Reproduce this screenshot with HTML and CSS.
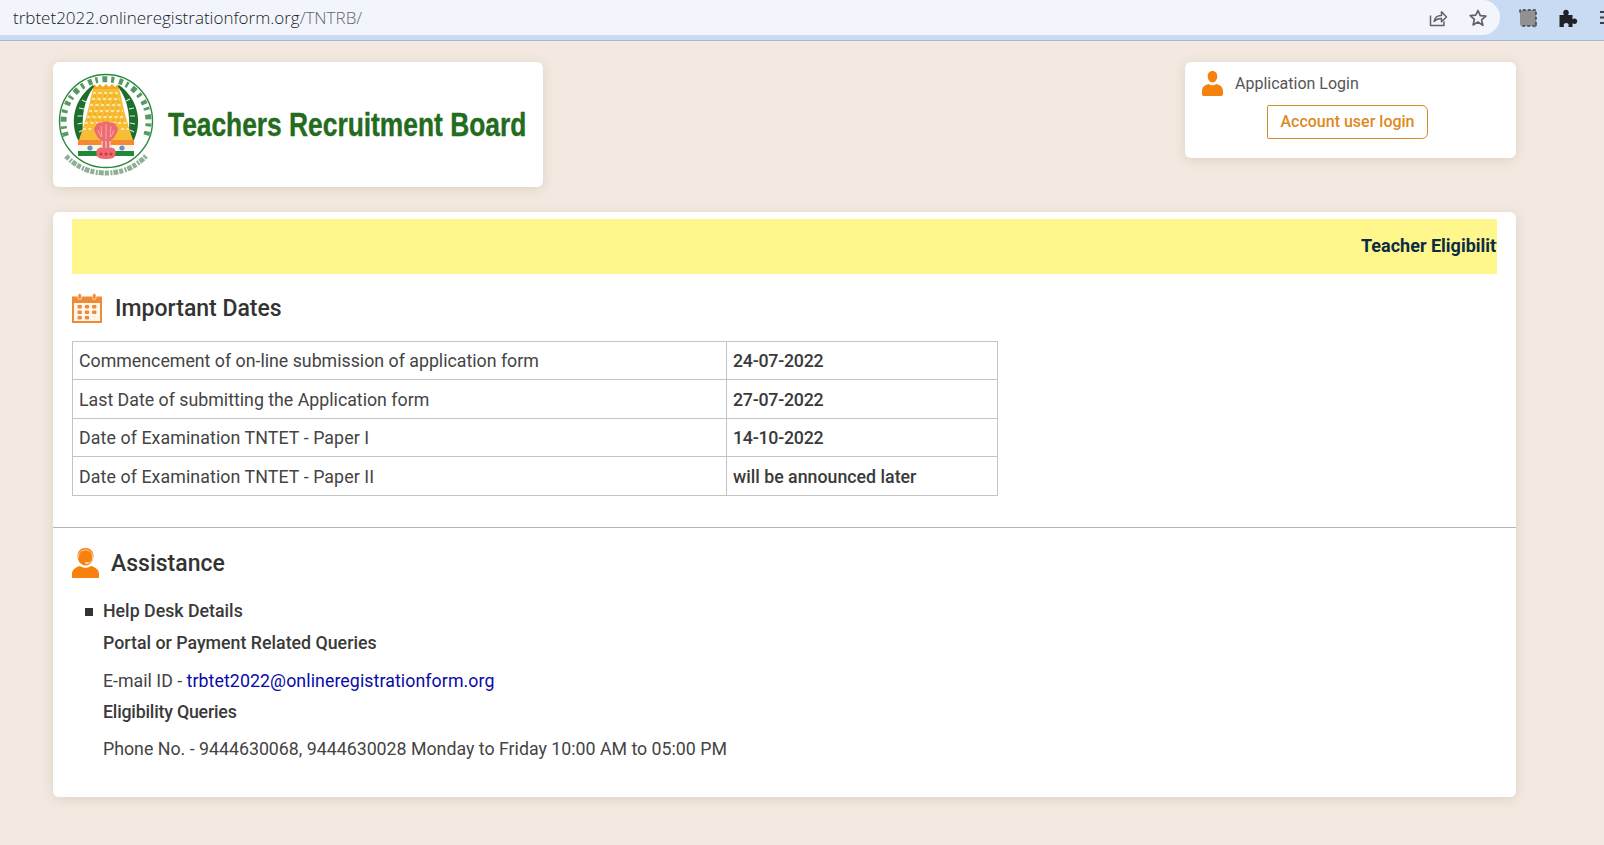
FILE: index.html
```html
<!DOCTYPE html>
<html lang="en">
<head>
<meta charset="utf-8">
<title>TNTRB</title>
<link rel="stylesheet" href="styles.css">
</head>
<body>
<div class="chrome">
  <div class="omnibox">
    <div class="url">trbtet2022.onlineregistrationform.org<span class="url-path">/TNTRB/</span></div>
    <svg class="omni-icon share" viewBox="0 0 20 20"><path d="M2.500 7.500v10h13.500v-4M6 13.500c.6-3.600 3.400-6 7.500-6V3.800l5 5.200-5 4.800v-3.300c-3 0-5.500.8-7.500 3z" fill="none" stroke="#5f6368" stroke-width="1.500" stroke-linejoin="round"/></svg>
    <svg class="omni-icon star" viewBox="0 0 20 20"><path d="M10 2.500l2.300 5.200 5.600.5-4.300 3.700 1.300 5.500L10 14l-4.900 2.900 1.300-5.500-4.300-3.700 5.600-.5z" fill="none" stroke="#5f6368" stroke-width="1.700" stroke-linejoin="round"/></svg>
  </div>
  <div class="ext-icons">
    <svg class="ext" viewBox="0 0 20 20"><rect x="2" y="2" width="16" height="16" rx="2" fill="#8f9193"/><path d="M2 4.500V2.500Q2 2 2.500 2H18v16H2.500" fill="none" stroke="#3c4043" stroke-width="1.500" stroke-dasharray="3 2"/><path d="M17 15.500v4M15 17.500h4" stroke="#5f6368" stroke-width="1"/></svg>
    <svg class="ext" viewBox="0 0 20 20"><path d="M1.500 7H6c-.6-.8-.8-1.500-.8-2.200C5.200 3 6.500 1.800 8 1.800s2.800 1.200 2.800 3c0 .7-.2 1.400-.8 2.200h4.500v4.300c.7-.5 1.400-.7 2-.7 1.600 0 2.700 1.200 2.700 2.700s-1.100 2.700-2.700 2.700c-.6 0-1.300-.2-2-.7V19h-4.300c.4-.7.500-1.200.5-1.700 0-1.400-1.100-2.300-2.500-2.300s-2.500.9-2.500 2.300c0 .5.100 1 .5 1.700H1.500z" fill="#202124"/></svg>
    <svg class="ext menu" viewBox="0 0 12 20"><path d="M2 4h12M2 9.500h12M2 15h12" stroke="#3c4043" stroke-width="2"/></svg>
  </div>
</div>

<div class="page">
  <header class="top-row">
    <div class="card logo-card">
      <svg class="emblem" viewBox="0 0 96 106">
        <!-- outer ring -->
        <circle cx="48" cy="49" r="46.500" fill="#fff" stroke="#2c8a3e" stroke-width="1.400"/>
        <!-- lettering band -->
        <path d="M8 64A42.500 42.500 0 1 1 88 64" fill="none" stroke="#559a63" stroke-width="6" stroke-dasharray="4 3.500 2.500 4.500 5 4 3 5"/>
        <circle cx="48" cy="49" r="36.500" fill="#fff"/>
        <!-- bottom lettering -->
        <path d="M8 84Q24 101 48 101T88 84" fill="none" stroke="#8fb098" stroke-width="5" stroke-dasharray="4 1.500 2 1 5 1"/>
        <!-- flanking crescents -->
        <path d="M20 68C11 48 17 26 35 13l1.500 1.500C25 28 23 48 26 68z" fill="#1e6f2e"/>
        <path d="M76 68C85 48 79 26 61 13l-1.500 1.500C71 28 73 48 70 68z" fill="#1e6f2e"/>
        <path d="M21 60l4-2M19.500 52l5-1M19.500 44l5 0M21 36l5 1M24 28l4 2M72 58l4 2M72 51l5 1M72 44l5 0M71 37l5-1M68 29l4-2" stroke="#dcefe0" stroke-width="1.100"/>
        <!-- gopuram -->
        <path d="M35 16h26l3 13 3 13 4 14 4 12H21l4-12 4-14 3-13z" fill="#f8bd36"/>
        <path d="M36 12l3 3 3-3 3 3 3-3 3 3 3-3 3 3 3-3v5H36z" fill="#f2a820"/>
        <g stroke="#fff3c4" stroke-width="1.500" stroke-dasharray="3 2.500">
          <path d="M35 21h26M34 27h28M32 33h32M31 39h34M29 45h38M27 51h42M25 57h8M63 57h8"/>
        </g>
        <g stroke="#e89a1c" stroke-width="1" stroke-dasharray="2 3">
          <path d="M36 24h24M34 30h28M33 36h30M31 42h34M29 48h38"/>
        </g>
        <!-- flag band -->
        <path d="M20 68h56v5H20z" fill="#f28c33"/>
        <path d="M20 73h56v6H20z" fill="#f6f6ee"/>
        <path d="M20 79h56v5H20z" fill="#1f8a35"/>
        <circle cx="32" cy="76" r="2.600" fill="#6f8fc9"/>
        <circle cx="64" cy="76" r="2.600" fill="#6f8fc9"/>
        <!-- national emblem -->
        <path d="M38 62c-3-4-2-7 0-8 0-3 3-4 5-3 2-2 8-2 10 0 2-1 5 0 5 3 2 1 3 4 0 8-1 3-3 5-5 6l-1 7 3 1c3 1 3 5 2 8-1 2-3 3-9 3s-8-1-9-3c-1-3-1-7 2-8l3-1-1-7c-2-1-4-3-5-6z" fill="#ec6a70"/>
        <path d="M48 52v15M43 54l1 11M53 54l-1 11M40 58l3 7M56 58l-3 7" stroke="#f7a9ac" stroke-width="1"/>
        <path d="M44 69v7M48 69v7M52 69v7" stroke="#fbe4e4" stroke-width="1"/>
        <circle cx="43" cy="82" r="1.500" fill="#c9393f"/><circle cx="48" cy="82" r="1.500" fill="#c9393f"/><circle cx="53" cy="82" r="1.500" fill="#c9393f"/>
      </svg>
      <div class="logo-text">Teachers Recruitment Board</div>
    </div>
    <div class="card login-card">
      <div class="login-title">
        <svg class="user-icon" viewBox="0 0 22 26"><path d="M11 0c3.200 0 5 2.400 5 5.500S14.200 12 11 12 6 8.600 6 5.500 7.800 0 11 0zM0 21c0-4 2.500-6.500 7-7.500 1.200 1 2.500 1.300 4 1.300s2.800-.3 4-1.300c4.500 1 7 3.500 7 7.500v3.500c0 1-1 1.500-2 1.500H2c-1 0-2-.5-2-1.500z" fill="#f6820d"/></svg>
        <span>Application Login</span>
      </div>
      <a class="login-btn">Account user login</a>
    </div>
  </header>

  <main class="card main-card">
    <div class="section-top">
      <div class="ticker"><span>Teacher Eligibility Test 2022 - Online Application Portal</span></div>
      <h2 class="heading heading-dates">
        <svg class="cal-icon" viewBox="0 0 30 30"><path d="M0 3.500h30V30H0z" fill="#f08a35"/><rect x="2" y="10" width="26" height="18" fill="#fff6ee"/><rect x="6" y="0.500" width="3.400" height="6" rx="1.700" fill="#f08a35" stroke="#fff" stroke-width=".6"/><rect x="20.600" y="0.500" width="3.400" height="6" rx="1.700" fill="#f08a35" stroke="#fff" stroke-width=".6"/><g fill="#ee8a3c"><rect x="5.500" y="12" width="4.400" height="3.400" rx="1"/><rect x="12.800" y="12" width="4.400" height="3.400" rx="1"/><rect x="20" y="12" width="4.400" height="3.400" rx="1"/><rect x="5.500" y="17.500" width="4.400" height="3.400" rx="1"/><rect x="12.800" y="17.500" width="4.400" height="3.400" rx="1"/><rect x="20" y="17.500" width="4.400" height="3.400" rx="1"/><rect x="5.500" y="23" width="4.400" height="3.400" rx="1"/><rect x="12.800" y="23" width="4.400" height="3.400" rx="1"/></g></svg>
        Important Dates
      </h2>
      <table class="dates">
        <tr><td class="c1">Commencement of on-line submission of application form</td><td class="c2 date">24-07-2022</td></tr>
        <tr><td class="c1">Last Date of submitting the Application form</td><td class="c2 date">27-07-2022</td></tr>
        <tr><td class="c1">Date of Examination TNTET - Paper I</td><td class="c2 date">14-10-2022</td></tr>
        <tr><td class="c1">Date of Examination TNTET - Paper II</td><td class="c2">will be announced later</td></tr>
      </table>
    </div>
    <div class="section-help">
      <h2 class="heading heading-help">
        <svg class="agent-icon" viewBox="0 0 27 31"><path d="M13.500 0c4.800 0 8 3.400 8 8 0 5-3.500 9.500-8 9.500s-8-4.500-8-9.500c0-4.600 3.200-8 8-8z" fill="#f6820d"/><path d="M6.500 10V8.500C6.500 4.500 9.500 2 13.500 2s7 2.500 7 6.500V11c0 2.500-2.500 3.800-5.500 4" fill="none" stroke="#fbd3ae" stroke-width="1"/><rect x="13" y="14" width="3.500" height="2" rx="1" fill="#fbd3ae"/><path d="M0 26c0-4 3-6.500 8-8 1.500 1.200 3.500 1.800 5.500 1.800s4-.6 5.500-1.800c5 1.500 8 4 8 8v3c0 .6-.5 1-1 1H1c-.5 0-1-.4-1-1z" fill="#f6820d"/></svg>
        Assistance
      </h2>
      <ul class="help-list">
        <li>
          <div class="help-title">Help Desk Details</div>
          <div class="help-sub">Portal or Payment Related Queries</div>
          <p class="help-line help-mail">E-mail ID - <a class="mail">trbtet2022@onlineregistrationform.org</a></p>
          <div class="help-sub help-elig">Eligibility Queries</div>
          <p class="help-line help-phone">Phone No. - 9444630068, 9444630028 Monday to Friday 10:00 AM to 05:00 PM</p>
        </li>
      </ul>
    </div>
  </main>
</div>
</body>
</html>
```

FILE: styles.css
```css
* { box-sizing: border-box; }
html, body { margin: 0; height: 100%; overflow: hidden; }
body {
  background: #f3e9e0;
  font-family: Roboto, "Liberation Sans", sans-serif;
  color: #333;
}

/* Browser toolbar */
.chrome {
  display: flex;
  height: 41px;
  background: #c9daf3;
  border-bottom: 1px solid #a9b7cc;
  padding-bottom: 5px;
}
.omnibox {
  flex: none;
  width: 1500px;
  display: flex;
  align-items: center;
  background: #f2f6fc;
  border-radius: 0 18px 18px 0;
  padding: 0 0 0 13px;
}
.url {
  flex: 1;
  font-family: "Open Sans", "Liberation Sans", sans-serif;
  font-size: 17px;
  font-weight: 300;
  color: #202124;
}
.url-path { color: #5f6368; }
.omni-icon { width: 20px; height: 20px; }
.share { margin-right: 20px; }
.star { margin-right: 12px; }
.ext-icons {
  display: flex;
  align-items: center;
  padding-left: 18px;
  gap: 20px;
}
.ext { width: 20px; height: 20px; flex: none; }
.ext.menu { width: 12px; }

/* Layout */
.page { padding: 21px 88px 0 53px; }
.top-row {
  display: flex;
  justify-content: space-between;
  align-items: flex-start;
}
.card {
  background: #fff;
  border-radius: 6px;
  box-shadow: 0 2px 12px rgba(120, 90, 60, 0.16);
}

/* Logo */
.logo-card {
  width: 490px;
  height: 125px;
  display: flex;
  align-items: center;
  padding-left: 5px;
}
.emblem { width: 96px; height: 106px; flex: none; }
.logo-text {
  margin-left: 14px;
  font-family: "Liberation Sans", sans-serif;
  font-size: 34px;
  font-weight: 700;
  color: #236b1d;
  -webkit-text-stroke: 0.4px #236b1d;
  white-space: nowrap;
  transform: scaleX(0.775);
  transform-origin: left center;
}

/* Login */
.login-card {
  width: 331px;
  height: 96px;
  padding: 9px 0 0 17px;
}
.login-title {
  display: flex;
  align-items: center;
  gap: 12px;
  font-size: 16px;
  color: #555;
}
.user-icon { width: 21px; height: 25px; }
.login-btn {
  display: block;
  width: 161px;
  height: 34px;
  margin: 9px 0 0 65px;
  border: 1px solid #d68b2e;
  border-radius: 2px 6px 6px 2px;
  color: #dd8a24;
  font-size: 16px;
  font-weight: 500;
  line-height: 31px;
  text-align: center;
}

/* Main card */
.main-card { margin-top: 25px; height: 585px; }
.section-top {
  padding: 7px 19px 0;
  height: 316px;
  border-bottom: 1px solid #b5b5b5;
}
.ticker {
  height: 55px;
  background: #fff68c;
  overflow: hidden;
  white-space: nowrap;
  padding: 16px 0 0 1289px;
  font-size: 18px;
  font-weight: 700;
  color: #0c2c44;
}
.heading {
  display: flex;
  align-items: center;
  margin: 0;
  font-size: 23px;
  font-weight: 500;
  color: #333;
}
.heading-dates { margin-top: 18px; gap: 13px; height: 32px; }
.cal-icon { width: 30px; height: 30px; }

.dates {
  margin-top: 17px;
  border-collapse: collapse;
  width: 926px;
  table-layout: fixed;
  font-size: 17.770px;
}
.dates td {
  border: 1px solid #c4c4c4;
  height: 39px;
  padding: 1px 6px 0;
  color: #444;
}
.dates tr:nth-child(odd) td { height: 38px; padding-top: 0; }
.dates tr:nth-child(n+3) .c1 { letter-spacing: 0.09px; }
.c1 { width: 654px; }
.dates .c2 { font-weight: 500; color: #3a3a3a; }
.dates .date { letter-spacing: -0.25px; }

.section-help { padding: 20px 19px 0; }
.heading-help { gap: 12px; height: 31px; }
.agent-icon { width: 27px; height: 31px; }
.help-list {
  list-style: none;
  margin: 22px 0 0;
  padding: 0 0 0 31px;
  position: relative;
  font-size: 17.770px;
}
.help-list li::before {
  content: "";
  position: absolute;
  left: 13px;
  top: 7px;
  width: 8px;
  height: 8px;
  background: #333;
}
.help-title, .help-sub { font-weight: 500; color: #3a3a3a; }
.help-sub { margin-top: 12px; }
.help-line { margin: 17px 0 0; color: #444; }
.help-mail { margin-top: 18px; }
.help-elig { margin-top: 11px; letter-spacing: -0.2px; }
.mail { color: #0a0aa8; letter-spacing: 0.08px; }
```
